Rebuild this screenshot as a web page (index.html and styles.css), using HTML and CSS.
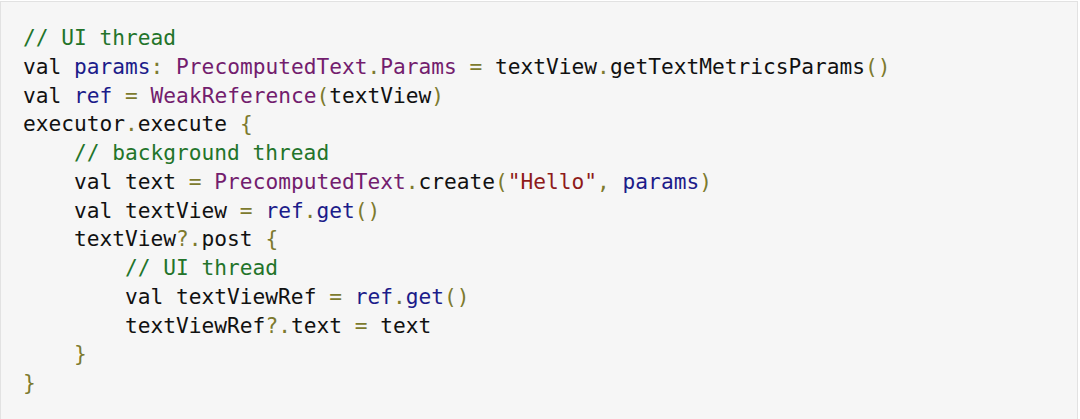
FILE: index.html
```html
<!DOCTYPE html>
<html>
<head>
<meta charset="utf-8">
<link rel="stylesheet" href="styles.css">
</head>
<body>
<div class="page">
<div class="code">
<div class="ln"><span class="c">// UI thread</span></div>
<div class="ln">val <span class="v">params</span><span class="o">:</span> <span class="t">PrecomputedText</span><span class="o">.</span><span class="t">Params</span> <span class="o">=</span> textView<span class="o">.</span>getTextMetricsParams<span class="o">()</span></div>
<div class="ln">val <span class="v">ref</span> <span class="o">=</span> <span class="t">WeakReference</span><span class="o">(</span>textView<span class="o">)</span></div>
<div class="ln">executor<span class="o">.</span>execute <span class="o">{</span></div>
<div class="ln i1"><span class="c">// background thread</span></div>
<div class="ln i1">val text <span class="o">=</span> <span class="t">PrecomputedText</span><span class="o">.</span>create<span class="o">(</span><span class="s">"Hello"</span><span class="o">,</span> <span class="v">params</span><span class="o">)</span></div>
<div class="ln i1">val textView <span class="o">=</span> <span class="v">ref</span><span class="o">.</span><span class="v">get</span><span class="o">()</span></div>
<div class="ln i1">textView<span class="o">?.</span>post <span class="o">{</span></div>
<div class="ln i2"><span class="c">// UI thread</span></div>
<div class="ln i2">val textViewRef <span class="o">=</span> <span class="v">ref</span><span class="o">.</span><span class="v">get</span><span class="o">()</span></div>
<div class="ln i2">textViewRef<span class="o">?.</span>text <span class="o">=</span> text</div>
<div class="ln i1"><span class="o">}</span></div>
<div class="ln"><span class="o">}</span></div>
</div>
</div>
</body>
</html>
```
FILE: styles.css
```css
html, body {
  margin: 0;
  padding: 0;
  background: #ffffff;
  overflow: hidden;
}
.page {
  padding-top: 1px;
  width: 1078px;
}
.code {
  box-sizing: border-box;
  width: 1078px;
  height: 419px;
  background: #f6f6f6;
  border: 1px solid #e2e2e2;
  border-bottom: none;
  padding: 22px 0 0 22px;
  font-family: "DejaVu Sans Mono", monospace;
  font-size: 21.2px;
  line-height: 28.75px;
  color: #111111;
}
.ln {
  white-space: pre;
  height: 28.75px;
}
.i1 { padding-left: 4ch; }
.i2 { padding-left: 8ch; }
.c { color: #23742a; }
.v { color: #1c1c8a; }
.t { color: #731d6e; }
.o { color: #7d7a2e; }
.s { color: #8e1a1a; }
```
